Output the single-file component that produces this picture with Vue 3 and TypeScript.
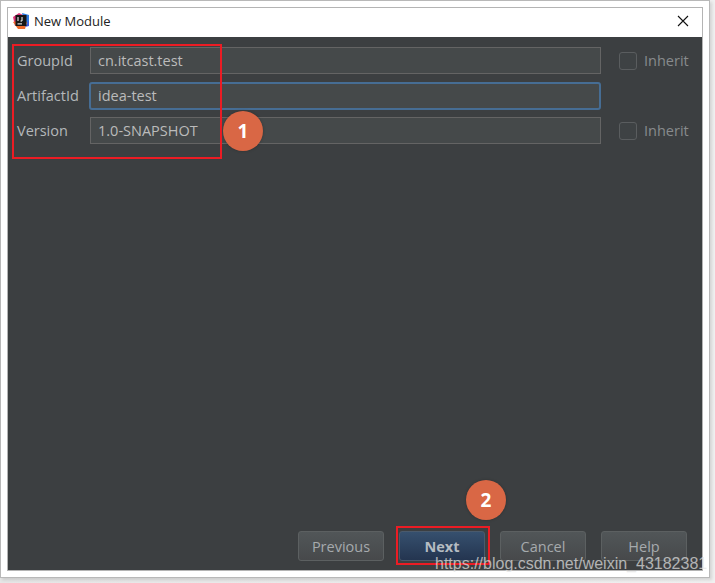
<script setup lang="ts">
interface Field { label: string; value: string; focused: boolean; inherit: boolean }
const fields: Field[] = [
  { label: 'GroupId', value: 'cn.itcast.test', focused: false, inherit: true },
  { label: 'ArtifactId', value: 'idea-test', focused: true, inherit: false },
  { label: 'Version', value: '1.0-SNAPSHOT', focused: false, inherit: true },
]
const buttons = ['Previous', 'Next', 'Cancel', 'Help']
</script>

<template>
  <div class="page">
    <div class="frame">
      <div class="window">
        <div class="titlebar">
          <svg class="logo" width="16" height="16" viewBox="0 0 16 16">
            <path d="M0 4 L6 0 L10 2 L6 9 L2 13 Z" fill="#e0327a" />
            <path d="M9 0 L16 2 L16 11 L11 8 Z" fill="#2f7de1" />
            <path d="M0 9 L5 16 L12 16 L14 9 L7 7 Z" fill="#f06a2a" />
            <path d="M12 14 L16 7 L16 13 Z" fill="#3b5fe0" />
            <rect x="2.5" y="2" width="11" height="11" fill="#161616" />
            <path d="M5 4 V8" stroke="#fff" stroke-width="1" fill="none" />
            <path d="M9 4 V8 H7.5" stroke="#fff" stroke-width="1" fill="none" />
            <rect x="4.5" y="10.4" width="4.5" height="1" fill="#fff" />
          </svg>
          <span class="title">New Module</span>
          <svg class="close" width="12" height="12" viewBox="0 0 12 12">
            <path d="M1 1 L11 11 M11 1 L1 11" stroke="#111" stroke-width="1.1" />
          </svg>
        </div>
        <div class="body">
          <div class="form">
            <div v-for="f in fields" :key="f.label" class="row">
              <span class="label">{{ f.label }}</span>
              <div class="input" :class="{ focused: f.focused }">{{ f.value }}</div>
              <div v-if="f.inherit" class="inherit">
                <span class="check"></span>
                <span>Inherit</span>
              </div>
            </div>
          </div>
          <div class="actions">
            <div
              v-for="b in buttons"
              :key="b"
              class="btn"
              :class="{ primary: b === 'Next' }"
            >{{ b }}</div>
          </div>
        </div>
      </div>
    </div>
    <div class="mark box-one"></div>
    <div class="mark box-two"></div>
    <div class="badge badge-one">1</div>
    <div class="badge badge-two">2</div>
    <div class="watermark">https://blog.csdn.net/weixin_43182381</div>
  </div>
</template>

<style>
html, body { margin: 0; background: #ebebeb; overflow: hidden; }
</style>

<style scoped>
.page {
  position: relative;
  width: 715px;
  height: 583px;
  overflow: hidden;
  box-sizing: border-box;
  background: linear-gradient(to right, #e6e6e6, #f0f0f0);
}
.frame {
  box-sizing: border-box;
  width: 710px;
  height: 578px;
  padding: 6px;
  background: #fff;
  border: 1px solid #b8b8b8;
  box-shadow: 2px 2px 3px rgba(0, 0, 0, 0.12);
}
.window {
  box-sizing: border-box;
  height: 564px;
  width: 696px;
  border: 1px solid #b4b4b4;
  display: flex;
  flex-direction: column;
  background: #fff;
}
.titlebar {
  height: 29px;
  flex: none;
  display: flex;
  align-items: center;
  padding-left: 5px;
  padding-right: 13px;
  background: #fff;
}
.logo { flex: none; margin-top: -3px; }
.title {
  margin-left: 5px;
  margin-top: -4px;
  font: 13px "Open Sans", "Noto Sans", sans-serif;
  color: #222;
  flex: 1;
}
.close { flex: none; margin-top: -3px; }
.body {
  flex: 1;
  display: flex;
  flex-direction: column;
  background: #3c3f41;
  padding: 10px 15px 9px 9px;
  min-height: 0;
}
.form {
  flex: 1;
  display: flex;
  flex-direction: column;
  gap: 8px;
}
.row {
  display: flex;
  align-items: center;
  height: 27px;
}
.label {
  width: 73px;
  flex: none;
  font: 14.5px "Open Sans", "Noto Sans", sans-serif;
  color: #b4b8ba;
}
.input {
  box-sizing: border-box;
  width: 511px;
  height: 27px;
  flex: none;
  border: 1px solid #646464;
  background: #45494a;
  color: #bbbbbb;
  font: 14.5px/25px "Open Sans", "Noto Sans", sans-serif;
  padding-left: 7px;
}
.input.focused {
  height: 28px;
  margin: 0 0 0 -1px;
  width: 512px;
  padding-left: 7px;
  border: 2px solid #466d94;
  border-radius: 3px;
  line-height: 24px;
}
.inherit {
  display: flex;
  align-items: center;
  gap: 7px;
  margin-left: 18px;
  font: 14.5px "Open Sans", "Noto Sans", sans-serif;
  color: #888b8d;
}
.check {
  box-sizing: border-box;
  width: 18px;
  height: 18px;
  border: 1px solid #5a5d5f;
  border-radius: 3px;
  background: #3e4244;
}
.actions {
  display: flex;
  justify-content: flex-end;
  gap: 15px;
}
.btn {
  box-sizing: border-box;
  width: 86px;
  height: 30px;
  border: 1px solid #5c6061;
  border-radius: 3px;
  background: linear-gradient(to bottom, #515658, #47494b);
  color: #a6aaad;
  font: 14.5px/29px "Open Sans", "Noto Sans", sans-serif;
  text-align: center;
}
.btn.primary {
  background: linear-gradient(to bottom, #36506e, #243550);
  border-color: #4a5a6c;
  color: #b5bcc2;
  font-weight: 700;
}
.mark {
  position: absolute;
  box-sizing: border-box;
  border: 2px solid #ec1c24;
}
.box-one { left: 12px; top: 44px; width: 210px; height: 115px; }
.box-two { left: 396px; top: 526px; width: 94px; height: 39px; }
.badge {
  position: absolute;
  width: 40px;
  height: 40px;
  border-radius: 50%;
  background: #d96745;
  box-shadow: 0 0 3px rgba(0, 0, 0, 0.25);
  color: #fff;
  font: 700 19px/40px "Open Sans", "Noto Sans", sans-serif;
  text-align: center;
}
.badge-one { left: 223px; top: 111px; }
.badge-two { left: 466px; top: 480px; }
.watermark {
  position: absolute;
  left: 435px;
  top: 554px;
  white-space: nowrap;
  font: 16px/20px "Liberation Sans", Arial, sans-serif;
  color: rgba(226, 226, 226, 0.72);
}
</style>
